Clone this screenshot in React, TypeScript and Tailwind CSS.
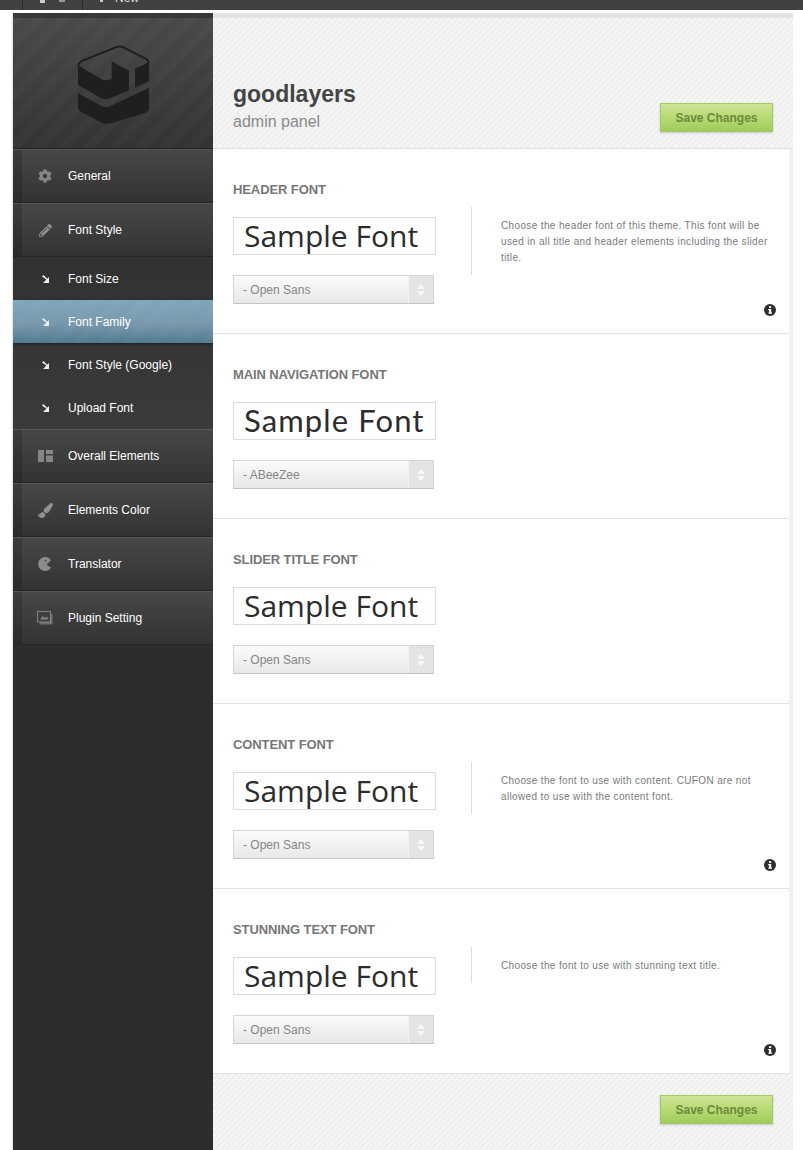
import { FaCog, FaPaintBrush, FaPencilAlt } from "react-icons/fa";
import type { ReactNode } from "react";

const ARIAL = "font-['Liberation_Sans',Arial,sans-serif]";

function Logo() {
  return (
    <svg width="85" height="90" viewBox="0 0 255 270" fill="#1f1f1f">
      <path d="M25 78Q25 68 38 62L140 21Q150 17 160 22L225 55Q236 60 236 70" fill="none" stroke="#1f1f1f" strokeWidth="6" />
      <path d="M24 76L98 119Q108 124 125 116L125 64L177 92L177 151L120 175Q108 180 95 175L24 135Z" />
      <path d="M195 86L237 66L237 124L195 143Z" />
      <path d="M24 160L95 198Q108 204 122 198L237 143L237 205Q237 214 225 219L122 250Q108 254 95 248L35 217Q24 211 24 200Z" />
    </svg>
  );
}

function LayoutIcon() {
  return (
    <svg width="15" height="12" viewBox="0 0 15 12" fill="#858585">
      <rect x="0" y="0" width="6" height="12" />
      <rect x="8" y="0" width="7" height="4" />
      <rect x="8" y="5.5" width="7" height="6.5" />
    </svg>
  );
}

function PacmanIcon() {
  return (
    <svg width="14" height="14" viewBox="0 0 14 14" fill="#8c8c8c">
      <path d="M13 3.2A7 7 0 1 0 13 10.8L8.5 7.4Z" />
      <circle cx="7.5" cy="3.6" r="0.9" fill="#3a3a3a" />
    </svg>
  );
}

function PluginIcon() {
  return (
    <svg width="16" height="14" viewBox="0 0 16 14">
      <rect x="2.5" y="3" width="13" height="10.5" fill="#6f6f6f" />
      <rect x="0.5" y="0.5" width="13" height="10.5" fill="#3f3f3f" stroke="#858585" />
      <path d="M3 8.5L6 5L8 7L10 5.5L11.5 8.5Z" fill="#858585" />
    </svg>
  );
}

function ArrowIcon() {
  return (
    <svg width="8" height="8" viewBox="0 0 8 8" fill="#eeeeee">
      <path d="M0 1.4L1.4 0L5.2 3.8L7 2V8H1L2.8 6.2V6.2L4.4 4.6Z" />
    </svg>
  );
}

function InfoIcon() {
  return (
    <svg width="12" height="12" viewBox="0 0 12 12">
      <circle cx="6" cy="6" r="6" fill="#2e2e2e" />
      <rect x="5" y="2.2" width="2.2" height="1.8" fill="#fff" />
      <path d="M4.2 5H7.2V8.6H8V9.8H4.4V8.6H5.1V6.2H4.2Z" fill="#fff" />
    </svg>
  );
}

function NavItem({ icon, label }: { icon: ReactNode; label: string }) {
  return (
    <div className="flex h-[54px] border-t border-b border-t-[#555555] border-b-[#262626] bg-gradient-to-b from-[#474747] to-[#333333]">
      <div className="w-[9px] bg-black/15" />
      <div className="ml-[13px] flex w-[20px] items-center justify-center">{icon}</div>
      <span className="ml-[13px] self-center text-[12px] text-white">{label}</span>
    </div>
  );
}

function SubItem({ label, active }: { label: string; active?: boolean }) {
  return (
    <div
      className={
        active
          ? "flex h-[43px] items-center bg-[repeating-linear-gradient(135deg,rgba(255,255,255,0.025)_0_9px,transparent_9px_18px),linear-gradient(#7fa7bb,#7898ab_55%,#4f7a90)] shadow-[0_1px_3px_rgba(0,0,0,0.5)]"
          : "flex h-[43px] items-center"
      }
    >
      <div className="ml-[29px] flex w-[8px]">
        <ArrowIcon />
      </div>
      <span className="ml-[18px] text-[12px] text-white">{label}</span>
    </div>
  );
}

function Sidebar() {
  return (
    <aside className="w-[200px] shrink-0 overflow-hidden bg-[#2d2d2d]">
      <div className="h-[136px] border-b border-b-[#222222] bg-[repeating-linear-gradient(135deg,rgba(255,255,255,0.018)_0_9px,transparent_9px_18px),linear-gradient(#4a4a4a,#333333)]">
        <div className="h-[5px] bg-black/25" />
        <div className="flex justify-center pt-[22px] pr-[1px]">
          <Logo />
        </div>
      </div>
      <NavItem icon={<FaCog size={14} color="#858585" />} label="General" />
      <NavItem icon={<FaPencilAlt size={13} color="#909090" />} label="Font Style" />
      <div className="h-[172px] bg-[repeating-linear-gradient(135deg,rgba(255,255,255,0.025)_0_1.414px,transparent_1.414px_2.828px),linear-gradient(#2f2f2f,#383838)]">
        <SubItem label="Font Size" />
        <SubItem label="Font Family" active />
        <SubItem label="Font Style (Google)" />
        <SubItem label="Upload Font" />
      </div>
      <NavItem icon={<LayoutIcon />} label="Overall Elements" />
      <NavItem icon={<FaPaintBrush size={15} color="#909090" />} label="Elements Color" />
      <NavItem icon={<PacmanIcon />} label="Translator" />
      <NavItem icon={<PluginIcon />} label="Plugin Setting" />
    </aside>
  );
}

function SaveButton() {
  return (
    <button
      type="button"
      className="h-[29px] w-[113px] border border-[#a3c964] bg-gradient-to-b from-[#cde692] to-[#a0cd58] text-[12px] font-bold text-[#6b8a3a] shadow-[0_1px_2px_rgba(0,0,0,0.18)]"
    >
      Save Changes
    </button>
  );
}

function FontSection({
  title,
  font,
  desc,
  barHeight,
}: {
  title: string;
  font: string;
  desc?: string;
  barHeight?: string;
}) {
  const sample =
    font === "ABeeZee"
      ? "pl-[10px] font-['Lato',sans-serif] text-[31px] leading-[34px] tracking-[1.1px]"
      : "pl-[10px] font-['Open_Sans',sans-serif] text-[30px] leading-[36px]";
  return (
    <section className="h-[185px] border-b border-b-[#e2e2e2] bg-white pl-[20px]">
      <div className="flex h-[49px] items-end">
        <h3 className="text-[13px] leading-[16px] font-bold tracking-[-0.1px] text-[#777777] uppercase">{title}</h3>
      </div>
      <div className="flex pt-[9px]">
        <div className="mt-[10px] w-[238px] shrink-0">
          <div className={`h-[38px] w-[203px] border border-[#dcdcdc] text-[#2c2c2c] ${sample}`}>Sample Font</div>
          <div className="mt-[20px] flex h-[29px] w-[201px] border border-[#d4d4d4] border-b-[#c4c4c4] bg-gradient-to-b from-[#fbfbfb] to-[#e8e8e8]">
            <span className="flex-1 pl-[9px] text-[12px] leading-[29px] text-[#858585]">- {font}</span>
            <div className="flex w-[25px] flex-col items-center justify-center gap-[2px] border-l border-l-[#f4f4f4] bg-[#e4e4e4]">
              <div className="h-0 w-0 border-x-[4px] border-b-[5px] border-x-transparent border-b-[#f7f7f7]" />
              <div className="h-0 w-0 border-x-[4px] border-t-[5px] border-x-transparent border-t-[#f7f7f7]" />
            </div>
          </div>
        </div>
        {desc && (
          <div className="flex h-[109px] flex-1 flex-col">
            <div className={`w-[302px] border-l border-l-[#dcdcdc] pt-[11px] pl-[29px] ${barHeight}`}>
              <p className="text-[10px] leading-[16px] tracking-[0.36px] text-[#7a7a7a]">{desc}</p>
            </div>
            <div className="mt-auto mr-[13px] flex justify-end">
              <InfoIcon />
            </div>
          </div>
        )}
      </div>
    </section>
  );
}

export default function App() {
  return (
    <div className={`h-[1150px] w-[803px] overflow-hidden bg-white ${ARIAL}`}>
      <div className="flex h-[10px] overflow-hidden bg-[#414141] text-[12px] leading-[14px] text-[#dddddd]">
        <div className="w-[23px] border-r border-r-[#2a2a2a]" />
        <div className="flex w-[60px] gap-[14px] border-r border-r-[#2a2a2a] pl-[17px]">
          <div className="h-[3px] w-[5px] bg-[#cccccc]" />
          <div className="h-[2px] w-[6px] bg-[#999999]" />
        </div>
        <div className="ml-[17px] h-[2px] w-[3px] bg-[#cccccc]" />
        <div className="-mt-[9px] pl-[12px]">New</div>
      </div>
      <div className="mt-[3px] ml-[13px] flex h-[1137px] w-[780px] shadow-[-1px_0_1px_rgba(0,0,0,0.1)]">
        <Sidebar />
        <main className="flex w-[580px] flex-col bg-[repeating-linear-gradient(135deg,#f7f7f7_0_1.414px,#efefef_1.414px_4.243px)]">
          <div className="h-[5px] bg-[#e4e4e4]" />
          <header className="flex h-[131px] items-end justify-between border-b border-b-[#e0e0e0] pr-[20px] pl-[20px]">
            <div className="pb-[12px]">
              <h1 className="text-[23px] leading-[28px] font-bold text-[#444444]">goodlayers</h1>
              <p className="text-[16px] leading-[28px] text-[#8a8a8a]">admin panel</p>
            </div>
            <div className="pb-[16px]">
              <SaveButton />
            </div>
          </header>
          <div className="border-r-4 border-r-[#f1f1f1]">
            <FontSection
              title="Header Font"
              font="Open Sans"
              desc="Choose the header font of this theme. This font will be used in all title and header elements including the slider title."
              barHeight="h-[68px]"
            />
            <FontSection title="Main Navigation Font" font="ABeeZee" />
            <FontSection title="Slider Title Font" font="Open Sans" />
            <FontSection
              title="Content Font"
              font="Open Sans"
              desc="Choose the font to use with content. CUFON are not allowed to use with the content font."
              barHeight="h-[52px]"
            />
            <FontSection
              title="Stunning Text Font"
              font="Open Sans"
              desc="Choose the font to use with stunning text title."
              barHeight="h-[36px]"
            />
          </div>
          <div className="flex justify-end pt-[21px] pr-[20px]">
            <SaveButton />
          </div>
        </main>
      </div>
    </div>
  );
}
